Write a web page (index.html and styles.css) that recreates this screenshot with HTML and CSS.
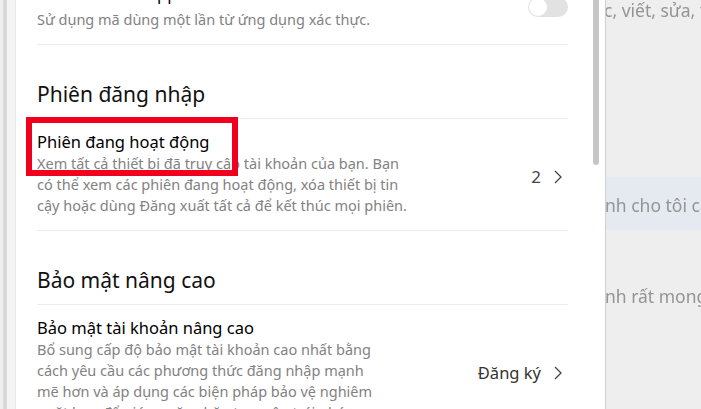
FILE: index.html
```html
<!DOCTYPE html>
<html lang="vi">
<head>
<meta charset="utf-8">
<title>Bảo mật</title>
<link rel="stylesheet" href="styles.css">
</head>
<body>
<div class="page">
  <div class="edge"></div>
  <main class="panel">
    <div class="content">
      <div class="row row-first">
        <div class="row-text">
          <div class="row-title">Authenticator app</div>
          <div class="row-desc desc-first">Sử dụng mã dùng một lần từ ứng dụng xác thực.</div>
        </div>
        <span class="toggle"><span class="knob"></span></span>
      </div>

      <h2 class="section-title">Phiên đăng nhập</h2>

      <div class="row">
        <div class="row-text">
          <div class="row-title">Phiên đang hoạt động</div>
          <div class="row-desc">Xem tất cả thiết bị đã truy cập tài khoản của bạn. Bạn<br>có thể xem các phiên đang hoạt động, xóa thiết bị tin<br>cậy hoặc dùng Đăng xuất tất cả để kết thúc mọi phiên.</div>
        </div>
        <div class="row-action">
          <span class="count">2</span>
          <svg class="chevron" width="8" height="14" viewBox="0 0 8 14"><path d="M1 1 L7 7 L1 13" fill="none" stroke="#444" stroke-width="1.3"/></svg>
        </div>
        <div class="highlight"></div>
      </div>

      <h2 class="section-title">Bảo mật nâng cao</h2>

      <div class="row">
        <div class="row-text">
          <div class="row-title">Bảo mật tài khoản nâng cao</div>
          <div class="row-desc">Bổ sung cấp độ bảo mật tài khoản cao nhất bằng<br>cách yêu cầu các phương thức đăng nhập mạnh<br>mẽ hơn và áp dụng các biện pháp bảo vệ nghiêm<br>ngặt hơn để giúp ngăn chặn truy cập trái phép.</div>
        </div>
        <div class="row-action">
          <span class="action-label">Đăng ký</span>
          <svg class="chevron" width="8" height="14" viewBox="0 0 8 14"><path d="M1 1 L7 7 L1 13" fill="none" stroke="#444" stroke-width="1.3"/></svg>
        </div>
      </div>
    </div>
    <div class="scroll-thumb"></div>
  </main>
  <div class="divider"></div>
  <aside class="side">
    <p class="side-text side-top">c, viết, sửa, tóm</p>
    <div class="side-band"><p class="side-text">nh cho tôi cách</p></div>
    <p class="side-text side-bottom">nh rất mong</p>
  </aside>
</div>
</body>
</html>
```

FILE: styles.css
```css
* { box-sizing: border-box; }

html, body {
  margin: 0;
  padding: 0;
}

body {
  font-family: "Noto Sans", "Open Sans", sans-serif;
  background: #efefef;
  color: #000;
}

.page {
  display: flex;
  width: 701px;
  height: 409px;
  overflow: hidden;
}

.edge {
  flex: 0 0 16px;
  background: linear-gradient(to right,
    #efefef 0 3px,
    #d9d9d9 3px 7px,
    #f4f4f4 7px 15px,
    #e9e9e9 15px 16px);
}

.panel {
  flex: 0 0 589px;
  position: relative;
  background: #fff;
  overflow: hidden;
}

.content {
  width: 552px;
  margin-top: -17px;
  padding-left: 21px;
}

.row {
  position: relative;
  display: flex;
  align-items: center;
  justify-content: space-between;
  padding: 12px 0 14px;
  border-bottom: 1px solid #ececec;
}

.row-first {
  padding-top: 0;
}

.row-title {
  font-size: 16.5px;
  line-height: 22px;
  color: #000;
}

.row-desc {
  font-size: 14.5px;
  line-height: 21px;
  color: #828282;
  white-space: nowrap;
}

.desc-first {
  margin-top: 4px;
}

.toggle {
  position: relative;
  width: 40px;
  height: 20px;
  border-radius: 10px;
  background: #e2e2e2;
}

.knob {
  position: absolute;
  left: 1px;
  top: 1px;
  width: 18px;
  height: 18px;
  border-radius: 50%;
  background: #fff;
}

.section-title {
  margin: 0;
  padding: 35px 0 9px;
  font-size: 21px;
  line-height: 29px;
  font-weight: 400;
  color: #111;
  border-bottom: 1px solid #ececec;
}

.row-action {
  display: flex;
  align-items: center;
  gap: 13px;
  padding-top: 6px;
  margin-right: 6px;
  color: #444;
}

.count {
  font-size: 17px;
  line-height: 22px;
}

.action-label {
  font-size: 16.5px;
  line-height: 22px;
  color: #333;
}

.chevron {
  display: block;
}

.highlight {
  position: absolute;
  left: -11px;
  top: -2px;
  width: 212px;
  height: 59px;
  border: 6px solid #f0001c;
}

.scroll-thumb {
  position: absolute;
  right: 6px;
  top: 0;
  width: 6px;
  height: 165px;
  border-radius: 0 0 3px 3px;
  background: #c6c6c6;
}

.divider {
  flex: 0 0 1px;
  background: #cfcfcf;
}

.side {
  flex: 1;
  background: #eeeeee;
  overflow: hidden;
}

.side-text {
  margin: 0;
  font-size: 17.5px;
  line-height: 22px;
  color: #949494;
  white-space: nowrap;
  filter: blur(0.7px);
}

.side-top {
  margin: -1px 0 0 -2px;
}

.side-band {
  margin-top: 156px;
  height: 53px;
  padding-top: 17px;
  background: #e5e9f0;
  overflow: hidden;
}

.side-band .side-text {
  margin-left: -1px;
}

.side-bottom {
  margin: 55px 0 0 -1px;
}
```
